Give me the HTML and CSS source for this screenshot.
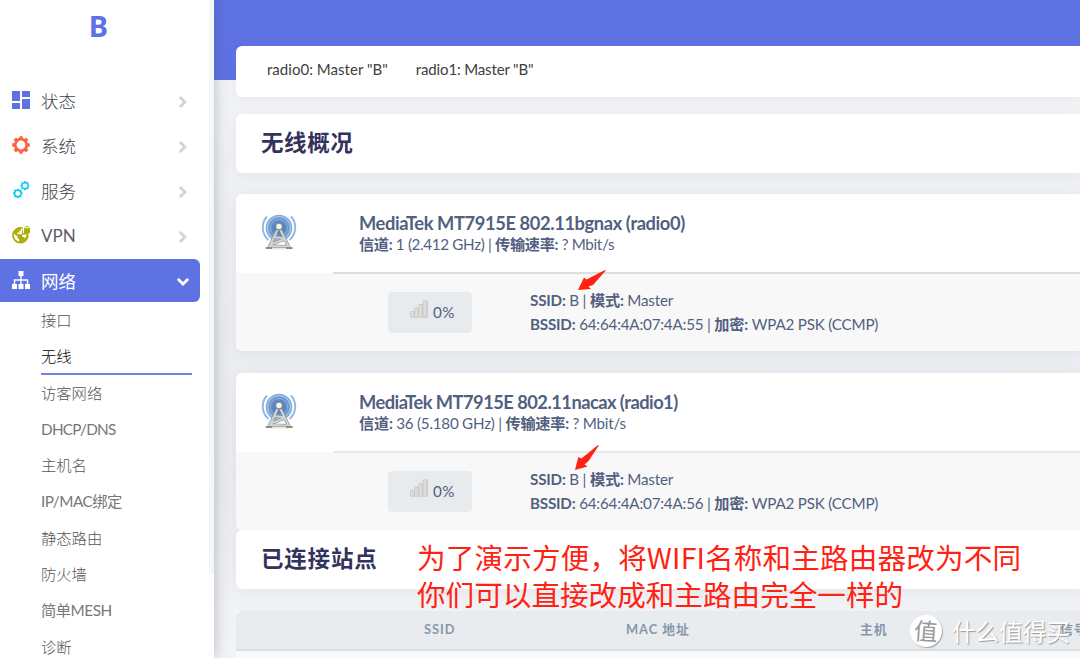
FILE: index.html
```html
<!DOCTYPE html>
<html lang="zh-CN">
<head>
<meta charset="utf-8">
<title>无线概况</title>
<link rel="stylesheet" href="styles.css">
</head>
<body>
<svg class="defs" width="0" height="0">
  <defs>
    <radialGradient id="wave" cx="50%" cy="50%" r="50%">
      <stop offset="0" stop-color="#3f74b8"/><stop offset=".6" stop-color="#5f90cd"/><stop offset="1" stop-color="#86aedd"/>
    </radialGradient>
    <linearGradient id="bar" x1="0" y1="0" x2="1" y2="0">
      <stop offset="0" stop-color="#e6e7e2"/><stop offset="1" stop-color="#cfd0ca"/>
    </linearGradient>
    <symbol id="tower" viewBox="0 0 36 36">
      <ellipse cx="18" cy="34" rx="14" ry="1.800" fill="#ddd" opacity=".6"/>
      <circle cx="18" cy="14" r="13.300" fill="url(#wave)"/>
      <g fill="none" stroke="#c5daf0" stroke-width=".8"><circle cx="18" cy="14" r="8.500" opacity=".5"/><circle cx="18" cy="14" r="11.500"/></g>
      <path d="M6 2.500a16.500 16.500 0 0 0 1.500 23.500M30 2.500a16.500 16.500 0 0 1-1.500 23.500" fill="none" stroke="#94b9e1" stroke-width="2"/>
      <path d="M17 15 8 33.500M19 15 28 33.500M13 23l11 1.500M24 25 9.500 30.500M8 32l20 .5" fill="none" stroke="#858988" stroke-width="3.200"/>
      <path d="M17 15 8 33.500M19 15 28 33.500M13 23l11 1.500M24 25 9.500 30.500M8 32l20 .5" fill="none" stroke="#d2d4d2" stroke-width="2"/>
      <path d="M4.800 34h6.500M25 34h6.500" stroke="#8b8e8d" stroke-width="2.200"/>
      <circle cx="18" cy="12.500" r="3.400" fill="#f4f4f0" stroke="#858888" stroke-width="1.300"/>
    </symbol>
    <symbol id="signal" viewBox="0 0 18 18">
      <g fill="url(#bar)" stroke="#c3c4bf" stroke-width=".8">
        <rect x=".5" y="11.500" width="4.200" height="5.800" rx=".8"/><rect x="4.700" y="8" width="4.200" height="9.300" rx=".8"/><rect x="8.900" y="4.500" width="4.200" height="12.800" rx=".8"/><rect x="13.100" y=".8" width="4.300" height="16.500" rx=".8"/>
      </g>
    </symbol>
    <symbol id="gear" viewBox="0 0 18 18">
      <circle cx="9" cy="9" r="5.800" fill="none" stroke="currentColor" stroke-width="2.800"/>
      <g stroke="currentColor" stroke-width="3.400"><path d="M9 .2v3M9 14.800v3M.2 9h3M14.800 9h3M2.800 2.800l2 2M13.200 13.200l2 2M2.800 15.200l2-2M13.200 4.800l2-2"/></g>
    </symbol>
    <symbol id="arrow" viewBox="0 0 28 20"><path d="M27.800.6 27 0 8.500 9.500 6 7.500 0 20l13-1-2.500-2.500L15 15Z" fill="#ff2212"/></symbol>
    <symbol id="chev" viewBox="0 0 8 12"><path d="M1.700 1.700 6 6l-4.300 4.300" fill="none" stroke="currentColor" stroke-width="2.800" stroke-linecap="round"/></symbol>
  </defs>
</svg>
<div class="app">
  <aside class="sidebar">
    <div class="brand">B</div>
    <nav class="menu">
      <a class="item"><svg class="icon status" viewBox="0 0 18 18"><path fill="currentColor" d="M0 0h8v10H0zM10 0h8v6h-8zM0 12h8v6H0zM10 8h8v10h-8z"/></svg><span>状态</span><svg class="chevron"><use href="#chev"/></svg></a>
      <a class="item"><svg class="icon system"><use href="#gear"/></svg><span>系统</span><svg class="chevron"><use href="#chev"/></svg></a>
      <a class="item"><svg class="icon service" viewBox="0 0 18 18"><use href="#gear" x="0.800" y="7.400" width="10" height="10"/><use href="#gear" x="8.200" y="0" width="9.400" height="9.400"/></svg><span>服务</span><svg class="chevron"><use href="#chev"/></svg></a>
      <a class="item"><svg class="icon vpn" viewBox="0 0 18 18"><path fill="currentColor" fill-rule="evenodd" d="M11 1.600V7h5.200A8.200 8.200 0 1 1 11 1.600ZM2 7.800c-.6 4 1.900 7.100 5.200 7.700v-2.200L5.500 12v-1.400ZM9 2.500v2H7.500v2H5.300v1.800h5v2.600h2.200v1.900c1.200-1.100 1.900-2.300 2-4.400H10V4.500h.8V2.500Z"/><path fill="currentColor" d="M12 2.200h6v5h-6z"/><path fill="none" stroke="currentColor" d="M13.300 2.500V1.300c0-1.200 3.400-1.200 3.400 0v1.200"/></svg><span class="latin">VPN</span><svg class="chevron"><use href="#chev"/></svg></a>
      <a class="item active"><svg class="icon" viewBox="0 0 18 18"><path fill="currentColor" d="M6.500 0h5v5h-5zM0 13h5v5H0zM6.500 13h5v5h-5zM13 13h5v5h-5z"/><path fill="none" stroke="currentColor" stroke-width="1.400" d="M9 4v9M2.500 13V9h13v4"/></svg><span>网络</span><svg class="chevron"><use href="#chev"/></svg></a>
    </nav>
    <nav class="submenu">
      <a>接口</a><a class="current">无线</a><a>访客网络</a><a class="tight dns">DHCP/DNS</a><a>主机名</a><a class="tight">IP/MAC绑定</a><a>静态路由</a><a>防火墙</a><a class="tight">简单MESH</a><a>诊断</a>
    </nav>
    <div class="scroll"></div>
  </aside>
  <main class="main">
    <div class="card tabs"><a>radio0: Master "B"</a><a>radio1: Master "B"</a></div>
    <h2 class="card heading">无线概况</h2>
    <section class="card radio">
      <div class="device">
        <svg class="tower"><use href="#tower"/></svg>
        <div class="info"><h3>MediaTek MT7915E 802.11bgnax (radio0)</h3><p class="rate"><b>信道:</b> 1 (2.412 GHz) | <b>传输速率:</b> ? Mbit/s</p></div>
      </div>
      <div class="network">
        <div class="badge"><svg class="signal"><use href="#signal"/></svg><span>0%</span></div>
        <div class="details"><p class="ssid"><b>SSID:</b> B | <b>模式:</b> Master</p><p class="bssid"><b>BSSID:</b> 64:64:4A:07:4A:55 | <b>加密:</b> WPA2 PSK (CCMP)</p></div>
      </div>
    </section>
    <section class="card radio second">
      <div class="device">
        <svg class="tower"><use href="#tower"/></svg>
        <div class="info"><h3>MediaTek MT7915E 802.11nacax (radio1)</h3><p class="rate"><b>信道:</b> 36 (5.180 GHz) | <b>传输速率:</b> ? Mbit/s</p></div>
      </div>
      <div class="network">
        <div class="badge"><svg class="signal"><use href="#signal"/></svg><span>0%</span></div>
        <div class="details"><p class="ssid"><b>SSID:</b> B | <b>模式:</b> Master</p><p class="bssid"><b>BSSID:</b> 64:64:4A:07:4A:56 | <b>加密:</b> WPA2 PSK (CCMP)</p></div>
      </div>
    </section>
    <h2 class="card heading stations">已连接站点</h2>
    <div class="table"><div class="thead"><span>SSID</span><span>MAC 地址</span><span>主机</span><span>信号</span></div></div>
  </main>
  <svg class="arrow first"><use href="#arrow"/></svg>
  <svg class="arrow last" viewBox="0 0 24 25"><path d="M23.800.6 23 0 6.500 13.500 3.300 12 0 25l12.500-3.500-3-2L13.500 16Z" fill="#ff2212"/></svg>
  <div class="note"><div>为了演示方便，将WIFI名称和主路由器改为不同</div><div>你们可以直接改成和主路由完全一样的</div></div>
  <div class="watermark"><span class="seal">值</span><span>什么值得买</span></div>
</div>
</body>
</html>
```
FILE: styles.css
```css
* { box-sizing: border-box; }
body { margin: 0; overflow: hidden; background: #f0f2f5; font-family: Lato, "Noto Sans CJK SC", sans-serif; color: #525f7f; }
h2, h3, p { margin: 0; }
.defs { position: absolute; }
.app { position: relative; display: flex; width: 1080px; height: 658px; overflow: hidden; white-space: nowrap; }

.sidebar { position: relative; z-index: 2; flex: none; width: 214px; height: 658px; background: #fff; box-shadow: 0 0 14px rgba(60, 65, 75, .32); }
.brand { height: 79px; padding: 5px 17px 0 0; text-align: center; font: 700 29px/41px "Noto Sans", sans-serif; color: #5e72e4; }
.menu { display: flex; flex-direction: column; gap: 2px; }
.item { display: flex; align-items: center; width: 200px; height: 43px; padding: 0 13px 1px 12px; font-size: 17.5px; font-weight: 300; color: #40444c; }
.icon { width: 18px; height: 18px; margin-right: 11px; flex: none; }
.item span { flex: 1; }
.item .latin { font-size: 17px; font-weight: 400; color: #5c6068; }
.chevron { width: 8px; height: 12px; margin-top: 3px; color: #ced4da; }
.status { color: #5e72e4; }
.system { color: #fb6340; }
.service { color: #11cdef; }
.vpn { color: #adad0a; }
.item.active { background: #5e72e4; color: #fff; border-radius: 0 6px 6px 0; }
.item.active span { font-weight: 400; }
.active .chevron { transform: rotate(90deg); color: #fff; }
.submenu { display: flex; flex-direction: column; padding-left: 41px; }
.submenu a { width: 151px; height: 36.3px; font-size: 15.3px; line-height: 36px; font-weight: 300; color: #555; }
.submenu .current { color: #000; border-bottom: 2px solid #7080e6; }
.submenu .tight { font-weight: 400; letter-spacing: -.5px; color: #777; }
.submenu .dns { letter-spacing: -.75px; }
.scroll { position: absolute; top: 0; right: 0; width: 5px; height: 574px; background: #f3f7fb; }

.main { flex: 1; min-width: 0; padding: 46px 0 0 22px; background: linear-gradient(#5e72e4 80px, #f3f4f6 80px, #eceef2 240px, #ebecf1 480px, #f3f4f6); }
.card { background: #fff; border-radius: 6px 0 0 6px; box-shadow: 0 2px 14px rgba(90, 100, 120, .08); }
.tabs { display: flex; gap: 28px; height: 51px; padding-left: 31px; font-size: 15px; line-height: 47px; color: #404040; }
.tabs a { letter-spacing: .03px; }
.tabs a + a { letter-spacing: -.15px; }
.heading { height: 59px; margin-top: 17px; padding-left: 25px; font-size: 22.5px; line-height: 58px; letter-spacing: .6px; color: #32325d; }
.radio { height: 157px; margin-top: 21px; overflow: hidden; font-size: 15.2px; }
.radio.second { margin-top: 22px; }
.device { display: flex; height: 79px; padding: 20px 0 0 25px; }
.tower { width: 36px; height: 36px; flex: none; }
.info { padding-left: 62px; }
.info h3 { font-size: 18.3px; line-height: 19px; letter-spacing: -.39px; }
.second h3 { letter-spacing: -.53px; }
.rate { line-height: 23px; letter-spacing: -.33px; }
.second .rate { letter-spacing: -.24px; }
.network { position: relative; display: flex; height: 78px; padding: 19px 0 0 152px; background: #f8f8f8; }
.network::before { content: ""; position: absolute; top: -1px; left: 97px; right: 0; height: 2px; background: #dcdee1; }
.second .network::before { background: #e6e8eb; }
.badge { display: flex; width: 84px; height: 41px; padding: 8px 0 0 22px; border-radius: 4px; background: #e8ebee; gap: 5px; }
.badge span { line-height: 25px; letter-spacing: .5px; }
.signal { width: 18px; height: 18px; }
.details { padding-left: 58px; margin-top: -4px; }
.details p { line-height: 24px; letter-spacing: -.2px; }
.stations { margin-top: 0; letter-spacing: .8px; }
.table { margin-top: 22px; height: 60px; background: #f8f9fa; }
.thead { display: grid; grid-template-columns: 202px 234px 200px 60px; height: 40px; padding-left: 188px; border-bottom: 2px solid #d9dee3; border-radius: 6px 0 0; background: #e9ecef; font-size: 12.8px; line-height: 37px; font-weight: 700; letter-spacing: 1px; color: #8898aa; }

.arrow { position: absolute; z-index: 3; overflow: visible; }
.first { left: 578px; top: 270px; width: 28px; height: 20px; }
.last { left: 575px; top: 445px; width: 24px; height: 25px; }
.note { position: absolute; left: 417px; top: 538px; font: 28.6px/37px "Noto Sans CJK SC", sans-serif; color: #ff2212; }
.note div:first-child { letter-spacing: .14px; }
.watermark { position: absolute; left: 910px; top: 614px; display: flex; gap: 10px; align-items: center; height: 34px; font: 23.6px/34px "Noto Sans CJK SC", sans-serif; color: #fff; text-shadow: 1px 1px 1px #999; }
.seal { width: 32px; height: 32px; border-radius: 50%; background: #fff; color: #999; text-align: center; line-height: 31px; transform: rotate(4deg); text-shadow: none; box-shadow: 1px 1px 1px #aaa; }
```
